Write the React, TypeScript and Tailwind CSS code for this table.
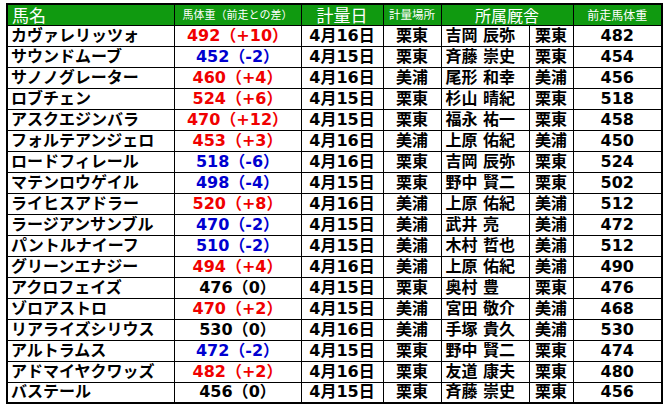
import React from "react";

type Row = {
  name: string;
  weight: number;
  diff: string;
  date: string;
  place: string;
  trainer: string;
  stable: string;
  prev: number;
};

const rows: Row[] = [
  { name: "カヴァレリッツォ", weight: 492, diff: "+10", date: "4月16日", place: "栗東", trainer: "吉岡 辰弥", stable: "栗東", prev: 482 },
  { name: "サウンドムーブ", weight: 452, diff: "-2", date: "4月15日", place: "栗東", trainer: "斉藤 崇史", stable: "栗東", prev: 454 },
  { name: "サノノグレーター", weight: 460, diff: "+4", date: "4月16日", place: "美浦", trainer: "尾形 和幸", stable: "美浦", prev: 456 },
  { name: "ロブチェン", weight: 524, diff: "+6", date: "4月15日", place: "栗東", trainer: "杉山 晴紀", stable: "栗東", prev: 518 },
  { name: "アスクエジンバラ", weight: 470, diff: "+12", date: "4月15日", place: "栗東", trainer: "福永 祐一", stable: "栗東", prev: 458 },
  { name: "フォルテアンジェロ", weight: 453, diff: "+3", date: "4月16日", place: "美浦", trainer: "上原 佑紀", stable: "美浦", prev: 450 },
  { name: "ロードフィレール", weight: 518, diff: "-6", date: "4月16日", place: "栗東", trainer: "吉岡 辰弥", stable: "栗東", prev: 524 },
  { name: "マテンロウゲイル", weight: 498, diff: "-4", date: "4月15日", place: "栗東", trainer: "野中 賢二", stable: "栗東", prev: 502 },
  { name: "ライヒスアドラー", weight: 520, diff: "+8", date: "4月16日", place: "美浦", trainer: "上原 佑紀", stable: "美浦", prev: 512 },
  { name: "ラージアンサンブル", weight: 470, diff: "-2", date: "4月15日", place: "美浦", trainer: "武井 亮", stable: "美浦", prev: 472 },
  { name: "パントルナイーフ", weight: 510, diff: "-2", date: "4月15日", place: "美浦", trainer: "木村 哲也", stable: "美浦", prev: 512 },
  { name: "グリーンエナジー", weight: 494, diff: "+4", date: "4月16日", place: "美浦", trainer: "上原 佑紀", stable: "美浦", prev: 490 },
  { name: "アクロフェイズ", weight: 476, diff: "0", date: "4月15日", place: "栗東", trainer: "奥村 豊", stable: "栗東", prev: 476 },
  { name: "ゾロアストロ", weight: 470, diff: "+2", date: "4月15日", place: "美浦", trainer: "宮田 敬介", stable: "美浦", prev: 468 },
  { name: "リアライズシリウス", weight: 530, diff: "0", date: "4月16日", place: "美浦", trainer: "手塚 貴久", stable: "美浦", prev: 530 },
  { name: "アルトラムス", weight: 472, diff: "-2", date: "4月15日", place: "栗東", trainer: "野中 賢二", stable: "栗東", prev: 474 },
  { name: "アドマイヤクワッズ", weight: 482, diff: "+2", date: "4月16日", place: "栗東", trainer: "友道 康夫", stable: "栗東", prev: 480 },
  { name: "バステール", weight: 456, diff: "0", date: "4月15日", place: "栗東", trainer: "斉藤 崇史", stable: "栗東", prev: 456 },
];

function diffColor(diff: string) {
  if (diff.startsWith("+")) return "text-[#f00000]";
  if (diff.startsWith("-")) return "text-[#0000d0]";
  return "text-black";
}

export default function App() {
  const th = "border border-black bg-[#109a10] text-white font-normal p-0 text-center";
  const td = "border border-black p-0";

  return (
    <div className="bg-white w-[667px] h-[409px] pl-[6px] pt-[3px] font-['DejaVu_Sans','Noto_Sans_CJK_JP',sans-serif]">
      <table className="table-fixed border-collapse border-2 border-black w-[655px]">
        <colgroup>
          <col className="w-[167px]" />
          <col className="w-[127px]" />
          <col className="w-[82px]" />
          <col className="w-[58px]" />
          <col className="w-[88px]" />
          <col className="w-[44px]" />
          <col className="w-[89px]" />
        </colgroup>
        <thead>
          <tr className="h-[21px] leading-none">
            <th className={`${th} text-left pl-[4px] text-[17px] font-['Noto_Sans_CJK_JP',sans-serif]`}>馬名</th>
            <th className={`${th} text-[11px] font-['Noto_Sans_CJK_JP',sans-serif]`}>馬体重（前走との差）</th>
            <th className={`${th} text-[17px] font-['Noto_Sans_CJK_JP',sans-serif]`}>計量日</th>
            <th className={`${th} text-[11.5px] font-['Noto_Sans_CJK_JP',sans-serif]`}>計量場所</th>
            <th colSpan={2} className={`${th} text-[16px] font-['Noto_Sans_CJK_JP',sans-serif]`}>所属厩舎</th>
            <th className={`${th} text-[12px] font-['Noto_Sans_CJK_JP',sans-serif]`}>前走馬体重</th>
          </tr>
        </thead>
        <tbody className="text-[16px] font-bold text-black leading-none">
          {rows.map((r) => (
            <tr key={r.name} className="h-[21px]">
              <td className={`${td} pl-[3px] whitespace-nowrap`}>{r.name}</td>
              <td className={`${td} text-center whitespace-nowrap ${diffColor(r.diff)}`}>
                {r.weight}（{r.diff}）
              </td>
              <td className={`${td} text-center`}>{r.date}</td>
              <td className={`${td} text-center`}>{r.place}</td>
              <td className={`${td} pl-[4px] whitespace-nowrap`}>{r.trainer}</td>
              <td className={`${td} text-center`}>{r.stable}</td>
              <td className={`${td} text-center`}>{r.prev}</td>
            </tr>
          ))}
        </tbody>
      </table>
    </div>
  );
}
